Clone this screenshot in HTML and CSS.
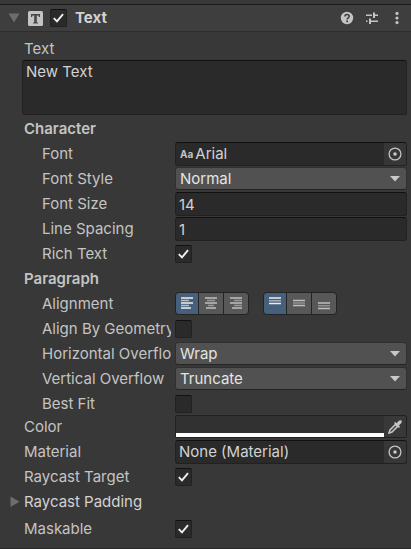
FILE: index.html
```html
<!DOCTYPE html>
<html lang="en">
<head>
<meta charset="utf-8">
<meta name="viewport" content="width=device-width, initial-scale=1">
<title>Inspector</title>
<link rel="stylesheet" href="styles.css">
</head>
<body>
<svg class="defs" aria-hidden="true">
  <symbol id="check" viewBox="0 0 18 18"><path d="M4 9.2 7.4 12.6 13.8 5" fill="none" stroke="#f0f0f0" stroke-width="2"/></symbol>
  <symbol id="arrow" viewBox="0 0 10 6"><path d="M0 0H10L5 5.5Z" fill="#c8c8c8"/></symbol>
  <symbol id="target" viewBox="0 0 14 14"><circle cx="7" cy="7" r="5.9" fill="none" stroke="#c4c4c4" stroke-width="1.3"/><rect x="5.5" y="5.5" width="3" height="3" rx=".6" fill="#d2d2d2"/></symbol>
</svg>
<main class="inspector">
  <header class="header">
    <button class="fold" aria-label="Collapse component"><svg width="12" height="10" viewBox="0 0 12 10"><path d="M.5 .5H11.5L6 9.5Z" fill="#6d6d6d"/></svg></button>
    <svg class="type" width="15" height="15" viewBox="0 0 15 15" aria-hidden="true"><rect width="15" height="15" rx="1.5" fill="#c4c4c4"/><path d="M3 3H12V6H11L10.4 4.6H8.8V11.3L10 11.7V12.4H5V11.7L6.2 11.3V4.6H4.6L4 6H3Z" fill="#484848"/></svg>
    <span class="tick"><input type="checkbox" checked aria-label="Enable Text"><svg><use href="#check"/></svg></span>
    <h1>Text</h1>
    <div class="tools">
      <button aria-label="Help"><svg width="14" height="14" viewBox="0 0 14 14"><circle cx="7" cy="7" r="6.2" fill="#c4c4c4"/><path d="M4.9 5.5C4.9 2.8 9.2 2.8 9.2 5.3C9.2 6.8 7.1 6.8 7.1 8.5" fill="none" stroke="#3e3e3e" stroke-width="1.6"/><rect x="6.2" y="9.5" width="1.8" height="1.7" fill="#3e3e3e"/></svg></button>
      <button aria-label="Presets"><svg width="14" height="14" viewBox="0 0 14 14"><path d="M1 4.3H7M8 4.3H13M1 10.3H2.5M4.5 10.3H13" stroke="#c4c4c4" stroke-width="1.4"/><path d="M9 1.5V7M5 7.5V13" stroke="#c4c4c4" stroke-width="2"/></svg></button>
      <button aria-label="More options"><svg width="14" height="14" viewBox="0 0 14 14"><g fill="#c4c4c4"><circle cx="7" cy="2.4" r="1.6"/><circle cx="7" cy="7" r="1.6"/><circle cx="7" cy="11.6" r="1.6"/></g></svg></button>
    </div>
  </header>

  <div class="text-block">
    <label for="text">Text</label>
    <textarea id="text" class="box">New Text</textarea>
  </div>

  <section>
    <h2>Character</h2>
    <div class="row sub">
      <label for="font">Font</label>
      <div class="box object"><b class="aa" aria-hidden="true">Aa</b><input id="font" value="Arial" readonly><button aria-label="Pick font"><svg width="14" height="14"><use href="#target"/></svg></button></div>
    </div>
    <div class="row sub">
      <label for="style">Font Style</label>
      <div class="select"><select id="style"><option>Normal</option></select><svg><use href="#arrow"/></svg></div>
    </div>
    <div class="row sub"><label for="size">Font Size</label><input id="size" class="box number" value="14"></div>
    <div class="row sub"><label for="spacing">Line Spacing</label><input id="spacing" class="box number" value="1"></div>
    <div class="row sub"><label for="rich">Rich Text</label><span class="tick"><input id="rich" type="checkbox" checked><svg><use href="#check"/></svg></span></div>
  </section>

  <section>
    <h2>Paragraph</h2>
    <div class="row sub">
      <span class="label">Alignment</span>
      <div class="groups">
        <div class="group" role="group" aria-label="Horizontal alignment">
          <button class="on" aria-label="Left"><svg width="14" height="14" viewBox="0 0 14 14"><path d="M1 2H13M1 7H13M1 12H11"/><path class="dim" d="M1 4.5H9M1 9.5H9"/></svg></button>
          <button aria-label="Center"><svg width="14" height="14" viewBox="0 0 14 14"><path d="M1 2H13M1 7H13M2 12H12"/><path class="dim" d="M3 4.5H11M4 9.5H10"/></svg></button>
          <button aria-label="Right"><svg width="14" height="14" viewBox="0 0 14 14"><path d="M1 2H13M1 7H13M3 12H13"/><path class="dim" d="M5 4.5H13M5 9.5H13"/></svg></button>
        </div>
        <div class="group" role="group" aria-label="Vertical alignment">
          <button class="on" aria-label="Top"><svg width="14" height="14" viewBox="0 0 14 14"><path d="M1 2H13M1 7.5H13"/><path class="dim" d="M1 4.8H13"/></svg></button>
          <button aria-label="Middle"><svg width="14" height="14" viewBox="0 0 14 14"><path d="M1 4.5H13M1 9.5H13"/><path class="dim" d="M1 7H13"/></svg></button>
          <button aria-label="Bottom"><svg width="14" height="14" viewBox="0 0 14 14"><path d="M1 7H13M1 12.5H13"/><path class="dim" d="M1 9.8H13"/></svg></button>
        </div>
      </div>
    </div>
    <div class="row sub"><label for="geometry">Align By Geometry</label><span class="tick"><input id="geometry" type="checkbox"><svg><use href="#check"/></svg></span></div>
    <div class="row sub">
      <label for="horizontal">Horizontal Overflow</label>
      <div class="select"><select id="horizontal"><option>Wrap</option></select><svg><use href="#arrow"/></svg></div>
    </div>
    <div class="row sub">
      <label for="vertical">Vertical Overflow</label>
      <div class="select"><select id="vertical"><option>Truncate</option></select><svg><use href="#arrow"/></svg></div>
    </div>
    <div class="row sub last"><label for="best">Best Fit</label><span class="tick"><input id="best" type="checkbox"><svg><use href="#check"/></svg></span></div>
  </section>

  <section>
    <div class="row">
      <span class="label">Color</span>
      <div class="color">
        <button class="swatch" aria-label="Color"></button>
        <button class="dropper" aria-label="Pick color"><svg width="14" height="14" viewBox="0 0 14 14"><path d="M1 13 2 10 7.5 4.5 9.5 6.5 4 12Z" fill="none" stroke="#c4c4c4" stroke-width="1.6"/><path d="M6 3 7.2 1.9 8.6 3.2 10.6 1C11.5 0 13 0 13.4 .6C14 1.3 14 2.4 13 3.4L10.8 5.4 12.1 6.8 11 8Z" fill="#c4c4c4"/></svg></button>
      </div>
    </div>
    <div class="row">
      <label for="material">Material</label>
      <div class="box object"><input id="material" value="None (Material)" readonly><button aria-label="Pick material"><svg width="14" height="14"><use href="#target"/></svg></button></div>
    </div>
    <div class="row"><label for="raycast">Raycast Target</label><span class="tick"><input id="raycast" type="checkbox" checked><svg><use href="#check"/></svg></span></div>
    <button class="padding"><svg width="10" height="12" viewBox="0 0 10 12"><path d="M.5 .5V11L9.5 5.7Z" fill="#6d6d6d"/></svg>Raycast Padding</button>
    <div class="row"><label for="maskable">Maskable</label><span class="tick"><input id="maskable" type="checkbox" checked><svg><use href="#check"/></svg></span></div>
  </section>
</main>
</body>
</html>
```
FILE: styles.css
```css
* { box-sizing: border-box; }
body { margin: 0; background: #383838; }
body, input, select, textarea, button { font: 15px/22px Inter, sans-serif; color: #c4c4c4; }
button, input, select, textarea { margin: 0; padding: 0; border: 0; border-radius: 0; background: none; outline: 0; min-width: 0; }
svg { display: block; }
.defs { position: absolute; width: 0; height: 0; }
h1, h2 { margin: 0; font-size: 15px; font-weight: 600; }
h1 { color: #d2d2d2; font-weight: 700; }
h2 { height: 25px; padding-left: 24px; line-height: 24px; }

.inspector { padding-top: 4px; padding-bottom: 6px; border-bottom: 1px solid #292929; }
.header { display: flex; align-items: center; height: 28px; padding: 0 7px 0 8px; border-top: 1px solid #1b1b1b; border-bottom: 1px solid #2d2d2d; background: #3e3e3e; }
.fold { margin-right: 8px; }
.type { margin-right: 7px; }
.header h1 { margin-left: 8px; }
.tools { display: flex; gap: 11px; margin-left: auto; }

.text-block { display: grid; padding: 6px 4px 2px 22px; }
.text-block label { padding-left: 2px; line-height: 22px; }
.box { border: 1px solid #212121; border-top-color: #111; border-radius: 3px; background: #2a2a2a; color: #d2d2d2; }
textarea { display: block; width: 100%; height: 55px; padding: 0 3px; resize: none; overflow: hidden; }

.row { display: grid; grid-template-columns: 147px minmax(0, 1fr); column-gap: 4px; height: 25px; padding: 0 4px 0 24px; }
.row > label, .row > .label { overflow: hidden; line-height: 24px; white-space: nowrap; }
.sub { grid-template-columns: 129px minmax(0, 1fr); padding-left: 42px; }
.last { height: 23px; }

.tick { display: grid; width: 17px; height: 18px; }
.row .tick { margin-top: 3px; }
.tick > * { grid-area: 1 / 1; width: 100%; height: 100%; }
.tick input { appearance: none; border: 1px solid #212121; border-top-color: #111; border-radius: 2px; background: #2a2a2a; }
.tick svg { visibility: hidden; pointer-events: none; }
.tick input:checked + svg { visibility: visible; }

.box.object { display: flex; align-items: stretch; height: 24px; }
.object input { flex: 1; padding-left: 3px; color: #d2d2d2; }
.aa { padding-left: 4px; color: #c4c4c4; font-size: 10px; }
.aa + input { padding-left: 2px; }
.object button { display: grid; place-items: center; width: 22px; border-radius: 0 2px 2px 0; background: #373737; }
.number { height: 24px; padding: 0 3px; }

.select { display: grid; align-items: center; height: 23px; }
.select > * { grid-area: 1 / 1; }
.select select { width: 100%; height: 23px; padding: 0 24px 2px 4px; appearance: none; border: 1px solid #303030; border-bottom-color: #242424; border-radius: 3px; background: #515151; color: #e4e4e4; }
.select svg { justify-self: end; width: 10px; height: 6px; margin-right: 7px; pointer-events: none; }

.groups { display: flex; gap: 14px; }
.group { display: flex; gap: 1px; height: 23px; border: 1px solid #242424; border-radius: 4px; background: #242424; overflow: hidden; }
.group button { display: grid; place-items: center; width: 24px; padding-bottom: 2px; background: #585858; }
.group .on { width: 22px; background: #46607c; }
.group path { stroke: #bebebe; stroke-width: 1.3; }
.group .dim { opacity: .65; }
.group .on path { stroke: #eee; }

.color { display: flex; height: 23px; border: 1px solid #212121; border-radius: 2px; }
.swatch { flex: 1; border-bottom: 4px solid #fff; background: #313131; }
.dropper { display: grid; place-items: center; width: 22px; }

.padding { display: flex; align-items: center; gap: 4px; width: 100%; height: 27px; padding: 0 10px 3px; color: #d2d2d2; text-align: left; }
```
